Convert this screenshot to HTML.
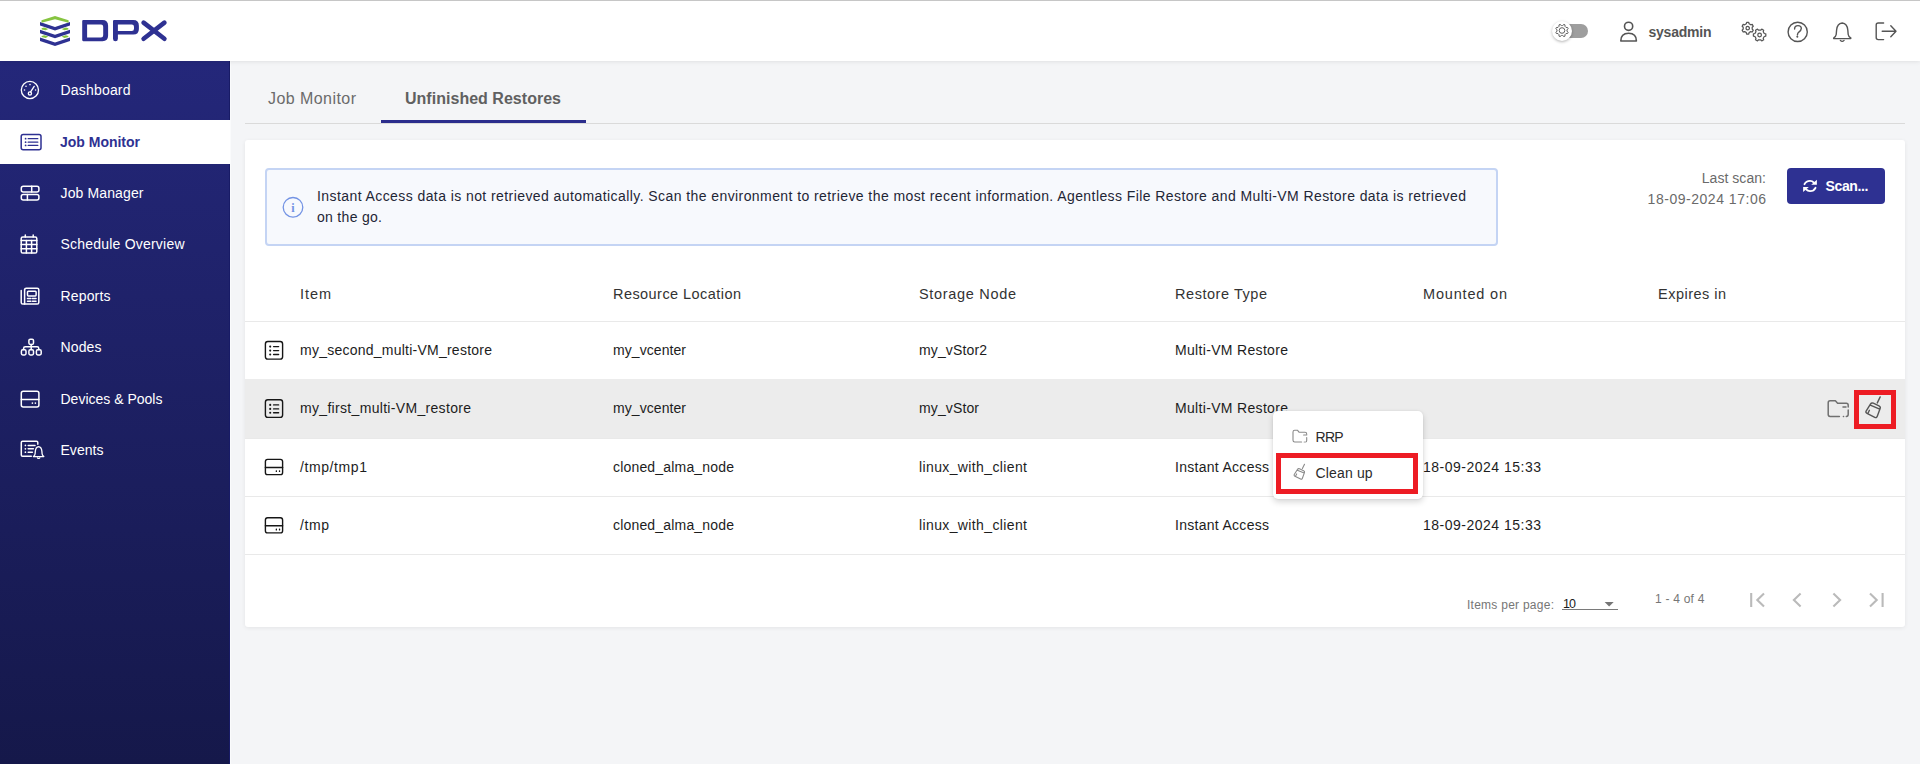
<!DOCTYPE html>
<html><head><meta charset="utf-8">
<style>
*{box-sizing:border-box;margin:0;padding:0}
html,body{width:1920px;height:764px;overflow:hidden;background:#f4f5f7;font-family:"Liberation Sans",sans-serif;position:relative}
.a{position:absolute}
.t{position:absolute;white-space:nowrap;line-height:1;z-index:10}
svg.i{position:absolute;overflow:visible;z-index:10}
#header{left:0;top:0;width:1920px;height:61px;background:#fff;box-shadow:0 0 5px rgba(0,0,0,0.12);z-index:3}
#topline{left:0;top:0;width:1920px;height:1px;background:#c6c6c6;z-index:4}
#sidebar{left:0;top:61px;width:230px;height:703px;background:linear-gradient(#24277a,#15184a);z-index:2}
#sbedge{left:229px;top:61px;width:1px;height:703px;background:#181b66;z-index:2}
#sbedge2{left:230px;top:61px;width:1px;height:703px;background:#fafbfc;z-index:2}
#navact{left:0;top:120px;width:230px;height:44px;background:#fff;z-index:2}
#card{left:245px;top:140px;width:1660px;height:487px;background:#fff;border-radius:3px;box-shadow:0 1px 4px rgba(0,0,0,0.07)}
#info{left:265px;top:168px;width:1233px;height:78px;background:#f7f9fd;border:2px solid #c4d4f4;border-radius:4px}
.hl{position:absolute;left:245px;width:1660px;height:1px;background:#e9e9e9}
#rowhl{left:245px;top:379px;width:1660px;height:59px;background:#ececec}
#btn{left:1787px;top:168px;width:98px;height:36px;background:#2e3192;border-radius:4px}
#menu{left:1273px;top:411px;width:150px;height:88px;background:#fff;border-radius:5px;box-shadow:0 3px 6px rgba(0,0,0,0.16),0 0 2px rgba(0,0,0,0.08);z-index:11}
.redbox{position:absolute;border:5px solid #ed1c24;z-index:13}
</style></head>
<body>
<div id="header" class="a"></div>
<div id="topline" class="a"></div>

<!-- logo -->
<svg class="i" style="left:0;top:0" width="200" height="61" viewBox="0 0 200 61">
  <g fill="#2e3192">
    <!-- blue V bands -->
    <polygon points="40,22 55,27 70,22 70,25.6 55,30.6 40,25.6"/>
    <polygon points="40,29.7 55,34.7 70,29.7 70,33.3 55,38.3 40,33.3"/>
    <polygon points="40,37.4 55,42.4 70,37.4 70,41 55,46 40,41"/>
  </g>
  <g fill="#86c440">
    <polygon points="41.5,20.3 55,15.9 68.6,20.3 68.6,22.8 55,19.3 41.5,22.8"/>
    <polygon points="41.6,28.2 44.2,27.6 48.4,28.9 45.6,30.3 41.6,29.4"/>
    <polygon points="68.4,28.2 65.8,27.6 61.6,28.9 64.4,30.3 68.4,29.4"/>
    <polygon points="41.6,35.9 44.2,35.3 48.4,36.6 45.6,38 41.6,37.1"/>
    <polygon points="68.4,35.9 65.8,35.3 61.6,36.6 64.4,38 68.4,37.1"/>
  </g>
  <g fill="#2e3192">
    <!-- D -->
    <path d="M82.2,21.2 Q82.2,20.1 83.3,20.1 L102.5,20.1 Q108.1,20.1 108.1,25.7 L108.1,35.6 Q108.1,41.2 102.5,41.2 L83.3,41.2 Q82.2,41.2 82.2,40.1 Z M87.1,24.5 L87.1,37.5 L101,37.5 Q103.2,37.5 103.2,35.3 L103.2,26.7 Q103.2,24.5 101,24.5 Z" fill-rule="evenodd"/>
    <!-- P -->
    <path d="M113,21.2 Q113,20.1 114.1,20.1 L133.3,20.1 Q138.9,20.1 138.9,25.7 L138.9,29 Q138.9,34.6 133.3,34.6 L117.9,34.6 L117.9,38.8 Q117.9,41.3 115.45,41.3 Q113,41.3 113,38.8 Z M117.9,24.5 L117.9,30.9 L131.8,30.9 Q134,30.9 134,28.7 L134,26.7 Q134,24.5 131.8,24.5 Z" fill-rule="evenodd"/>
  </g>
  <g stroke="#2e3192" stroke-width="4.6" stroke-linecap="round" fill="none">
    <line x1="143.6" y1="22.6" x2="164.4" y2="38.8"/>
    <line x1="164.4" y1="22.6" x2="143.6" y2="38.8"/>
  </g>
</svg>

<!-- header right -->
<div class="a" style="left:1562px;top:24px;width:26px;height:14px;border-radius:7px;background:#9e9e9e;z-index:5"></div>
<div class="a" style="left:1552px;top:20.7px;width:20px;height:20px;border-radius:50%;background:#fff;box-shadow:0 1px 3px rgba(0,0,0,0.3);z-index:6"></div>
<svg class="i" style="left:0;top:0;z-index:7" width="1920" height="61">
  <g fill="none" stroke="#555" stroke-width="0.95" stroke-linejoin="round">
    <!-- toggle gear -->
    <path d="M1562.55,25.53 L1563.98,24.41 L1564.91,24.80 L1565.13,26.60 L1565.90,27.37 L1567.70,27.59 L1568.09,28.52 L1566.97,29.95 L1566.97,31.05 L1568.09,32.48 L1567.70,33.41 L1565.90,33.63 L1565.13,34.40 L1564.91,36.20 L1563.98,36.59 L1562.55,35.47 L1561.45,35.47 L1560.02,36.59 L1559.09,36.20 L1558.87,34.40 L1558.10,33.63 L1556.30,33.41 L1555.91,32.48 L1557.03,31.05 L1557.03,29.95 L1555.91,28.52 L1556.30,27.59 L1558.10,27.37 L1558.87,26.60 L1559.09,24.80 L1560.02,24.41 L1561.45,25.53 Z M1564.80,30.50 A2.8,2.8 0 1 0 1559.20,30.50 A2.8,2.8 0 1 0 1564.80,30.50 Z"/>
  </g>
</svg>
<svg class="i" style="left:0;top:0" width="1920" height="61">
  <g fill="none" stroke="#555" stroke-width="1.6" stroke-linecap="round" stroke-linejoin="round">
    <!-- user -->
    <circle cx="1628.6" cy="26.3" r="4.1"/>
    <path d="M1620.8,41 L1636.4,41 Q1636.4,33.3 1628.6,33.3 Q1620.8,33.3 1620.8,41 Z"/>
    <!-- help -->
    <circle cx="1797.7" cy="31.9" r="9.6" stroke-width="1.4"/>
    <path d="M1794.6,29 Q1794.6,25.6 1798,25.6 Q1801.3,25.6 1801.3,28.6 Q1801.3,30.6 1798.6,32.3 Q1797.7,33 1797.4,35" stroke-width="1.4"/>
    <circle cx="1797.2" cy="36.8" r="0.5" fill="#555" stroke-width="1"/>
    <!-- bell -->
    <path d="M1842.2,23 Q1837.2,23.5 1836.6,30 L1836.2,34.5 Q1836,36.3 1833.8,37.8 Q1833.3,38.5 1834.2,38.6 L1850.4,38.6 Q1851.2,38.5 1850.6,37.8 Q1848.4,36.3 1848.2,34.5 L1847.8,30 Q1847.2,23.5 1842.2,23 Z" stroke-width="1.4"/>
    <path d="M1840.3,40.4 Q1842.2,42.4 1844.1,40.4" stroke-width="1.3"/>
    <!-- logout -->
    <path d="M1883.6,23 L1878.2,23 Q1876.2,23 1876.2,25 L1876.2,37.6 Q1876.2,39.6 1878.2,39.6 L1883.6,39.6" stroke-width="1.4"/>
    <path d="M1882.2,31.3 L1896,31.3 M1890.8,25.8 L1896,31.3 L1890.8,36.8" stroke-width="1.4"/>
  </g>
  <g fill="none" stroke="#555" stroke-width="1.25" stroke-linejoin="round">
    <path d="M1746.28,23.83 L1746.66,22.39 L1748.74,22.39 L1749.12,23.83 L1750.78,24.78 L1752.21,24.39 L1753.25,26.20 L1752.20,27.24 L1752.20,29.16 L1753.25,30.20 L1752.21,32.01 L1750.78,31.62 L1749.12,32.57 L1748.74,34.01 L1746.66,34.01 L1746.28,32.57 L1744.62,31.62 L1743.19,32.01 L1742.15,30.20 L1743.20,29.16 L1743.20,27.24 L1742.15,26.20 L1743.19,24.39 L1744.62,24.78 Z M1749.40,28.20 A1.7,1.7 0 1 0 1746.00,28.20 A1.7,1.7 0 1 0 1749.40,28.20 Z"/>
    <path d="M1760.62,30.21 L1761.73,29.07 L1763.67,30.19 L1763.24,31.72 L1764.26,33.49 L1765.80,33.88 L1765.80,36.12 L1764.26,36.51 L1763.24,38.28 L1763.67,39.81 L1761.73,40.93 L1760.62,39.79 L1758.58,39.79 L1757.47,40.93 L1755.53,39.81 L1755.96,38.28 L1754.94,36.51 L1753.40,36.12 L1753.40,33.88 L1754.94,33.49 L1755.96,31.72 L1755.53,30.19 L1757.47,29.07 L1758.58,30.21 Z M1761.40,35.00 A1.8,1.8 0 1 0 1757.80,35.00 A1.8,1.8 0 1 0 1761.40,35.00 Z"/>
  </g>
</svg>

<div id="sidebar" class="a"></div>
<div id="sbedge" class="a"></div>
<div id="sbedge2" class="a"></div>
<div id="navact" class="a"></div>

<!-- sidebar icons -->
<svg class="i" style="left:0;top:0" width="230" height="764">
  <g fill="none" stroke="#fff" stroke-width="1.5" stroke-linecap="round" stroke-linejoin="round">
    <!-- dashboard -->
    <circle cx="29.9" cy="90" r="8.6" stroke-width="1.35"/>
    <circle cx="29.9" cy="93.4" r="1.6" stroke-width="1.35"/>
    <line x1="30.6" y1="91.9" x2="34.2" y2="86.4" stroke-width="1.35"/>
    <circle cx="26" cy="86.3" r="0.80" fill="#fff" stroke="none"/>
    <circle cx="30" cy="84.6" r="0.80" fill="#fff" stroke="none"/>
    <circle cx="24.5" cy="90" r="0.80" fill="#fff" stroke="none"/>
    <circle cx="35.6" cy="90" r="0.80" fill="#fff" stroke="none"/>
    <!-- job manager -->
    <rect x="21.3" y="186.3" width="17.6" height="5.6" rx="2"/>
    <line x1="31.7" y1="186.3" x2="31.7" y2="191.9"/>
    <rect x="21.3" y="194.4" width="17.6" height="5.5" rx="2"/>
    <line x1="27.4" y1="194.4" x2="27.4" y2="199.9"/>
    <!-- schedule -->
    <rect x="21.2" y="237" width="15.6" height="16" rx="1.6"/>
    <line x1="21.2" y1="240.6" x2="36.8" y2="240.6"/>
    <line x1="21.2" y1="244.6" x2="36.8" y2="244.6"/>
    <line x1="21.2" y1="248.8" x2="36.8" y2="248.8"/>
    <line x1="26.4" y1="240.6" x2="26.4" y2="253"/>
    <line x1="31.6" y1="240.6" x2="31.6" y2="253"/>
    <line x1="25.3" y1="235" x2="25.3" y2="237"/>
    <line x1="33.2" y1="235" x2="33.2" y2="237"/>
    <!-- reports -->
    <path d="M24.6,289.8 Q24.6,288.2 26.2,288.2 L37.2,288.2 Q38.8,288.2 38.8,289.8 L38.8,302.4 Q38.8,304 37.2,304 L22.8,304 Q21.2,304 21.2,302.4 L21.2,290.6"/>
    <line x1="24.6" y1="289.8" x2="24.6" y2="304"/>
    <rect x="27.5" y="291.3" width="8.6" height="4.6" rx="0.8"/>
    <line x1="27.5" y1="298.6" x2="30.8" y2="298.6"/>
    <line x1="32.4" y1="298.6" x2="36" y2="298.6"/>
    <line x1="27.5" y1="301.3" x2="30.8" y2="301.3"/>
    <line x1="32.4" y1="301.3" x2="36" y2="301.3"/>
    <!-- nodes -->
    <rect x="28.9" y="339.2" width="4.6" height="5.2" rx="1.4"/>
    <line x1="31.2" y1="344.4" x2="31.2" y2="349.6"/>
    <path d="M23.6,349.6 L23.6,348.4 Q23.6,346.7 25.3,346.7 L37.1,346.7 Q38.8,346.7 38.8,348.4 L38.8,349.6"/>
    <rect x="21.4" y="349.8" width="4.6" height="5.2" rx="1.4"/>
    <rect x="28.9" y="349.8" width="4.6" height="5.2" rx="1.4"/>
    <rect x="36.4" y="349.8" width="4.8" height="5.2" rx="1.4"/>
    <!-- devices -->
    <rect x="21.3" y="391.3" width="17.6" height="15.7" rx="2"/>
    <line x1="21.3" y1="399.6" x2="38.9" y2="399.6"/>
    <circle cx="32.4" cy="403.1" r="0.85" fill="#fff" stroke="none"/>
    <circle cx="35.4" cy="403.1" r="0.85" fill="#fff" stroke="none"/>
    <!-- events -->
    <path d="M31.3,456.3 L22.6,456.3 Q21.3,456.3 21.3,455 L21.3,442.6 Q21.3,441.3 22.6,441.3 L36.5,441.3 Q37.8,441.3 37.8,442.6 L37.8,444.2"/>
    <circle cx="25.4" cy="445.4" r="0.85" fill="#fff" stroke="none"/>
    <circle cx="25.4" cy="448.8" r="0.85" fill="#fff" stroke="none"/>
    <circle cx="25.4" cy="452.2" r="0.85" fill="#fff" stroke="none"/>
    <line x1="28.2" y1="445.4" x2="35" y2="445.4"/>
    <line x1="28.2" y1="448.8" x2="33.4" y2="448.8"/>
    <line x1="28.2" y1="452.2" x2="32.4" y2="452.2"/>
    <path d="M38.6,446.6 Q35.6,447 35.3,451.4 L35.1,453.8 Q35,455.3 33.4,456.6 L43.8,456.6 Q42.2,455.3 42.1,453.8 L41.9,451.4 Q41.6,447 38.6,446.6 Z" stroke-width="1.3"/>
    <path d="M37.4,457.8 Q38.6,459.2 39.8,457.8" stroke-width="1.2"/>
  </g>
  <!-- job monitor active -->
  <g fill="none" stroke="#2e3192" stroke-width="1.5" stroke-linecap="round" stroke-linejoin="round">
    <rect x="21.2" y="134.4" width="19.8" height="15.3" rx="2"/>
    <line x1="28.2" y1="138.7" x2="37.8" y2="138.7" stroke-width="1.3"/>
    <line x1="28.2" y1="142.2" x2="37.8" y2="142.2" stroke-width="1.3"/>
    <line x1="28.2" y1="145.4" x2="37.8" y2="145.4" stroke-width="1.3"/>
    <circle cx="25.6" cy="138.7" r="0.90" fill="#2e3192" stroke="none"/>
    <circle cx="25.6" cy="142.2" r="0.90" fill="#2e3192" stroke="none"/>
    <circle cx="25.6" cy="145.4" r="0.90" fill="#2e3192" stroke="none"/>
  </g>
</svg>

<!-- tabs -->
<div class="a" style="left:245px;top:123px;width:1660px;height:1px;background:#dadada"></div>
<div class="a" style="left:381px;top:120px;width:205px;height:3px;background:#2b2d8c"></div>

<div id="card" class="a"></div>
<div id="info" class="a"></div>
<svg class="i" style="left:0;top:0" width="400" height="260">
  <circle cx="293" cy="207.3" r="9.8" fill="none" stroke="#7393e4" stroke-width="1.3"/>
  <text x="293" y="212.2" text-anchor="middle" font-family="Liberation Serif" font-size="12" font-weight="700" fill="#7393e4">i</text>
</svg>
<div id="btn" class="a"></div>
<svg class="i" style="left:0;top:0" width="1920" height="260">
  <g fill="none" stroke="#fff" stroke-width="1.9" stroke-linecap="round">
    <path d="M1804.5,184.2 Q1806.1,180.9 1810,180.9 Q1812.3,180.9 1813.9,182.6"/>
    <path d="M1815.5,187.8 Q1813.9,191.1 1810,191.1 Q1807.7,191.1 1806.1,189.4"/>
  </g>
  <g fill="#fff">
    <polygon points="1816.9,179.8 1816.9,184.7 1811.2,184.7"/>
    <polygon points="1803.1,186.9 1808.8,186.9 1803.1,191.9"/>
  </g>
</svg>

<!-- table -->
<div class="hl" style="top:321px"></div>
<div id="rowhl" class="a"></div>
<div class="hl" style="top:438px"></div>
<div class="hl" style="top:496px"></div>
<div class="hl" style="top:554px"></div>

<svg class="i" style="left:0;top:0" width="1920" height="560">
  <g fill="none" stroke="#161616" stroke-width="1.4" stroke-linecap="round" stroke-linejoin="round">
    <!-- list icons rows 1,2 -->
<rect x="265.4" y="341.5" width="17.2" height="17.6" rx="2.4"/>
<line x1="273.6" y1="346.6" x2="278.6" y2="346.6"/>
<line x1="273.6" y1="350.6" x2="278.6" y2="350.6"/>
<line x1="273.6" y1="354.5" x2="278.6" y2="354.5"/>
<rect x="265.4" y="399.8" width="17.2" height="17.6" rx="2.4"/>
<line x1="273.6" y1="404.9" x2="278.6" y2="404.9"/>
<line x1="273.6" y1="408.9" x2="278.6" y2="408.9"/>
<line x1="273.6" y1="412.8" x2="278.6" y2="412.8"/>
<rect x="265.4" y="459.4" width="17.2" height="15.2" rx="2.2"/>
<line x1="265.4" y1="467.5" x2="282.6" y2="467.5"/>
<rect x="265.4" y="517.7" width="17.2" height="15.2" rx="2.2"/>
<line x1="265.4" y1="525.8" x2="282.6" y2="525.8"/>
</g>
<g fill="#161616">
<circle cx="270.2" cy="346.6" r="1.05"/>
<circle cx="270.2" cy="350.6" r="1.05"/>
<circle cx="270.2" cy="354.5" r="1.05"/>
<circle cx="270.2" cy="404.9" r="1.05"/>
<circle cx="270.2" cy="408.9" r="1.05"/>
<circle cx="270.2" cy="412.8" r="1.05"/>
<rect x="275.7" y="470.3" width="1.3" height="1.8" rx="0.5"/>
<rect x="278.9" y="470.3" width="1.3" height="1.8" rx="0.5"/>
<rect x="275.7" y="528.6" width="1.3" height="1.8" rx="0.5"/>
<rect x="278.9" y="528.6" width="1.3" height="1.8" rx="0.5"/>
</g>
  <!-- row 2 actions -->
  <g fill="none" stroke="#707070" stroke-width="1.5" stroke-linecap="round" stroke-linejoin="round">
    <path d="M1848.2,407 L1848.2,405.2 Q1848.2,403.3 1846.3,403.3 L1837.6,403.3 L1835.4,400.8 L1830.1,400.8 Q1828.2,400.8 1828.2,402.7 L1828.2,414.6 Q1828.2,416.4 1830.1,416.4 L1839.4,416.4"/>
    <path d="M1843.4,416.4 L1843.6,416.4 M1846.3,416.4 Q1848.2,416.4 1848.2,414.6 L1848.2,410"/>
    <line x1="1843" y1="407" x2="1846" y2="407"/>
  </g>
  <g id="broomrow" fill="none" stroke="#555" stroke-width="1.4" stroke-linecap="round" stroke-linejoin="round">
    <path d="M1873.32,403.22 L1878.98,405.78 Q1880.8,406.6 1880.12,408.48 L1877.28,416.32 Q1876.6,418.2 1874.81,417.31 L1866.99,413.39 Q1865.2,412.5 1866.26,410.80 L1870.44,404.10 Q1871.5,402.4 1873.32,403.22 Z M1870.3,405.2 L1879.7,409.1 M1880.2,396.9 L1877.3,402.9 M1869.4,410.3 L1868.1,413"/>
  </g>
</svg>
<div class="redbox" style="left:1854px;top:390px;width:42px;height:39px"></div>

<!-- popup menu -->
<div id="menu" class="a"></div>
<svg class="i" style="left:0;top:0;z-index:12" width="1920" height="560">
  <g fill="none" stroke="#8a8a8a" stroke-width="1.1" stroke-linecap="round" stroke-linejoin="round">
    <path d="M1306.7,435 L1306.7,434 Q1306.7,432.3 1305,432.3 L1299.2,432.3 L1297.6,430.3 L1294.7,430.3 Q1293,430.3 1293,432 L1293,440.3 Q1293,442 1294.7,442 L1301.6,442"/>
    <path d="M1304.2,442 L1304.4,442 M1305.6,442 Q1306.7,442 1306.7,440.6 L1306.7,437.6"/>
    <line x1="1303.6" y1="435" x2="1305.8" y2="435"/>
    </g>
  <g fill="none" stroke="#8a8a8a" stroke-width="1.5" stroke-linecap="round" stroke-linejoin="round" transform="translate(1304.5,464.2) scale(0.725) translate(-1880.2,-396.9)">
    <path d="M1873.32,403.22 L1878.98,405.78 Q1880.8,406.6 1880.12,408.48 L1877.28,416.32 Q1876.6,418.2 1874.81,417.31 L1866.99,413.39 Q1865.2,412.5 1866.26,410.80 L1870.44,404.10 Q1871.5,402.4 1873.32,403.22 Z M1870.3,405.2 L1879.7,409.1 M1880.2,396.9 L1877.3,402.9 M1869.4,410.3 L1868.1,413"/>
  </g>
</svg>
<div class="redbox" style="left:1276px;top:453px;width:142px;height:41px"></div>

<!-- pagination -->
<div class="a" style="left:1562px;top:609px;width:56px;height:1px;background:#7a7a7a"></div>
<svg class="i" style="left:0;top:0" width="1920" height="640">
  <polygon points="1604.6,602 1613.7,602 1609.15,606.6" fill="#757575"/>
  <g fill="none" stroke="#bababa" stroke-width="2.1">
    <line x1="1751.2" y1="593" x2="1751.2" y2="607"/>
    <polyline points="1764,593.6 1757.3,600 1764,606.4"/>
    <polyline points="1800.6,593.6 1793.9,600 1800.6,606.4"/>
    <polyline points="1833.4,593.6 1840.1,600 1833.4,606.4"/>
    <polyline points="1870,593.6 1876.7,600 1870,606.4"/>
    <line x1="1882.6" y1="593" x2="1882.6" y2="607"/>
  </g>
</svg>

<span class="t" style="top:83.15px;font-size:14px;color:#ffffff;letter-spacing:0.188px;left:60.50px;">Dashboard</span>
<span class="t" style="top:134.95px;font-size:14px;color:#2e3192;font-weight:700;letter-spacing:-0.011px;left:60.00px;">Job Monitor</span>
<span class="t" style="top:185.95px;font-size:14px;color:#ffffff;letter-spacing:0.128px;left:60.50px;">Job Manager</span>
<span class="t" style="top:237.15px;font-size:14px;color:#ffffff;letter-spacing:0.211px;left:60.50px;">Schedule Overview</span>
<span class="t" style="top:288.95px;font-size:14px;color:#ffffff;letter-spacing:0.161px;left:60.50px;">Reports</span>
<span class="t" style="top:339.95px;font-size:14px;color:#ffffff;letter-spacing:0.133px;left:60.50px;">Nodes</span>
<span class="t" style="top:391.95px;font-size:14px;color:#ffffff;left:60.50px;">Devices &amp; Pools</span>
<span class="t" style="top:442.95px;font-size:14px;color:#ffffff;letter-spacing:0.037px;left:60.50px;">Events</span>
<span class="t" style="top:25.25px;font-size:14px;color:#555555;font-weight:700;letter-spacing:-0.228px;left:1648.50px;">sysadmin</span>
<span class="t" style="top:90.76px;font-size:16px;color:#6b6b6b;letter-spacing:0.441px;left:268.00px;">Job Monitor</span>
<span class="t" style="top:90.76px;font-size:16px;color:#606060;font-weight:700;letter-spacing:0.023px;left:405.00px;">Unfinished Restores</span>
<span class="t" style="top:189.45px;font-size:14px;color:#1f2636;letter-spacing:0.420px;left:317.00px;">Instant Access data is not retrieved automatically. Scan the environment to retrieve the most recent information. Agentless File Restore and Multi-VM Restore data is retrieved</span>
<span class="t" style="top:210.25px;font-size:14px;color:#1f2636;letter-spacing:0.302px;left:317.00px;">on the go.</span>
<span class="t" style="top:170.95px;font-size:14px;color:#6a6a6a;letter-spacing:0.052px;right:154.00px;margin-right:-0.052px;">Last scan:</span>
<span class="t" style="top:192.05px;font-size:14px;color:#6a6a6a;letter-spacing:0.524px;right:154.00px;margin-right:-0.524px;">18-09-2024 17:06</span>
<span class="t" style="top:178.85px;font-size:14px;color:#ffffff;font-weight:700;letter-spacing:-0.357px;left:1825.50px;">Scan...</span>
<span class="t" style="top:286.73px;font-size:14.5px;color:#333333;letter-spacing:0.932px;left:300.00px;">Item</span>
<span class="t" style="top:286.73px;font-size:14.5px;color:#333333;letter-spacing:0.442px;left:613.00px;">Resource Location</span>
<span class="t" style="top:286.73px;font-size:14.5px;color:#333333;letter-spacing:0.683px;left:919.00px;">Storage Node</span>
<span class="t" style="top:286.73px;font-size:14.5px;color:#333333;letter-spacing:0.547px;left:1175.00px;">Restore Type</span>
<span class="t" style="top:286.73px;font-size:14.5px;color:#333333;letter-spacing:0.823px;left:1423.00px;">Mounted on</span>
<span class="t" style="top:286.73px;font-size:14.5px;color:#333333;letter-spacing:0.481px;left:1658.00px;">Expires in</span>
<span class="t" style="top:342.95px;font-size:14px;color:#1d1d1d;letter-spacing:0.241px;left:300.00px;">my_second_multi-VM_restore</span>
<span class="t" style="top:342.95px;font-size:14px;color:#1d1d1d;letter-spacing:0.071px;left:613.00px;">my_vcenter</span>
<span class="t" style="top:342.95px;font-size:14px;color:#1d1d1d;letter-spacing:0.135px;left:919.00px;">my_vStor2</span>
<span class="t" style="top:342.95px;font-size:14px;color:#1d1d1d;letter-spacing:0.324px;left:1175.00px;">Multi-VM Restore</span>
<span class="t" style="top:401.25px;font-size:14px;color:#1d1d1d;letter-spacing:0.318px;left:300.00px;">my_first_multi-VM_restore</span>
<span class="t" style="top:401.25px;font-size:14px;color:#1d1d1d;letter-spacing:0.071px;left:613.00px;">my_vcenter</span>
<span class="t" style="top:401.25px;font-size:14px;color:#1d1d1d;letter-spacing:0.125px;left:919.00px;">my_vStor</span>
<span class="t" style="top:401.25px;font-size:14px;color:#1d1d1d;letter-spacing:0.324px;left:1175.00px;">Multi-VM Restore</span>
<span class="t" style="top:459.55px;font-size:14px;color:#1d1d1d;letter-spacing:0.594px;left:300.00px;">/tmp/tmp1</span>
<span class="t" style="top:459.55px;font-size:14px;color:#1d1d1d;letter-spacing:0.178px;left:613.00px;">cloned_alma_node</span>
<span class="t" style="top:459.55px;font-size:14px;color:#1d1d1d;letter-spacing:0.378px;left:919.00px;">linux_with_client</span>
<span class="t" style="top:459.55px;font-size:14px;color:#1d1d1d;letter-spacing:0.286px;left:1175.00px;">Instant Access</span>
<span class="t" style="top:459.55px;font-size:14px;color:#1d1d1d;letter-spacing:0.497px;left:1423.00px;">18-09-2024 15:33</span>
<span class="t" style="top:517.85px;font-size:14px;color:#1d1d1d;letter-spacing:0.589px;left:300.00px;">/tmp</span>
<span class="t" style="top:517.85px;font-size:14px;color:#1d1d1d;letter-spacing:0.178px;left:613.00px;">cloned_alma_node</span>
<span class="t" style="top:517.85px;font-size:14px;color:#1d1d1d;letter-spacing:0.378px;left:919.00px;">linux_with_client</span>
<span class="t" style="top:517.85px;font-size:14px;color:#1d1d1d;letter-spacing:0.286px;left:1175.00px;">Instant Access</span>
<span class="t" style="top:517.85px;font-size:14px;color:#1d1d1d;letter-spacing:0.497px;left:1423.00px;">18-09-2024 15:33</span>
<span class="t" style="top:430.15px;font-size:14px;color:#2b2b2b;letter-spacing:-0.781px;left:1315.60px;z-index:12">RRP</span>
<span class="t" style="top:466.15px;font-size:14px;color:#2b2b2b;letter-spacing:0.136px;left:1315.60px;z-index:12">Clean up</span>
<span class="t" style="top:598.84px;font-size:12px;color:#767676;letter-spacing:0.258px;left:1467.00px;">Items per page:</span>
<span class="t" style="top:598.42px;font-size:12.5px;color:#1a1a1a;letter-spacing:-0.906px;left:1563.00px;">10</span>
<span class="t" style="top:592.84px;font-size:12px;color:#767676;letter-spacing:0.225px;left:1655.00px;">1 - 4 of 4</span>
</body></html>
